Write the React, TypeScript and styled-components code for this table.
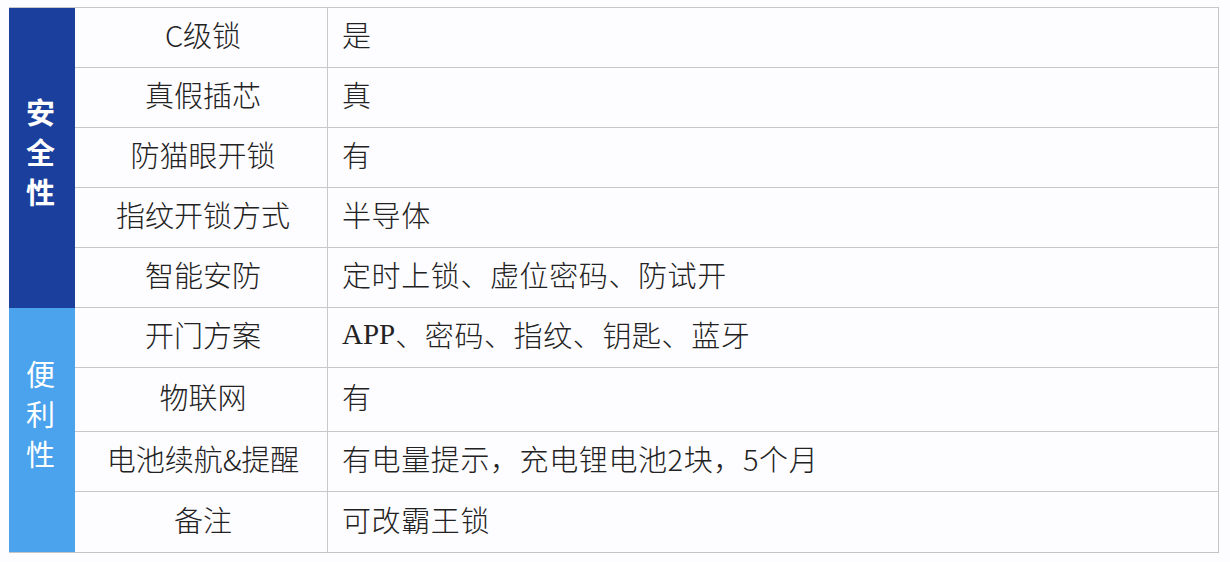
import React from 'react'
import styled, { createGlobalStyle } from 'styled-components'

const GlobalStyle = createGlobalStyle`
    html, body {
        margin: 0;
        padding: 0;
        background: #fdfcfe;
    }
    body {
        font-family: "Noto Sans CJK SC", "Noto Sans", sans-serif;
        color: #222;
    }
`

const Page = styled.div`
    width: 1230px;
    height: 562px;
    padding: 7px 0 0 9px;
    box-sizing: border-box;
`

const Table = styled.div`
    width: 1209px;
    border-right: 1px solid #c4c4c4;
    border-bottom: 1px solid #c4c4c4;
    border-top: 1px solid #c8c8c8;
    display: flex;
    flex-direction: column;
`

const Section = styled.div`
    display: flex;
`

const Side = styled.div<{ $bg: string; $bold?: boolean; $shift?: number }>`
    width: 66px;
    flex-shrink: 0;
    background: ${p => p.$bg};
    color: #fff;
    display: flex;
    flex-direction: column;
    align-items: center;
    justify-content: center;
    padding-bottom: ${p => p.$shift || 0}px;
    padding-right: 3px;
    box-sizing: border-box;
    font-size: 29px;
    font-weight: ${p => (p.$bold ? 700 : 400)};
    line-height: 40px;
`

const Rows = styled.div`
    flex: 1;
    display: flex;
    flex-direction: column;
`

const Row = styled.div<{ $h?: number; $last?: boolean }>`
    display: grid;
    grid-template-columns: 253px 1fr;
    height: ${p => p.$h || 60}px;
    border-bottom: ${p => (p.$last ? 'none' : '1px solid #c8c8c8')};
    box-sizing: border-box;
    font-size: 29px;
    font-weight: 300;
`

const Label = styled.div`
    display: flex;
    align-items: center;
    justify-content: center;
    border-right: 1px solid #c8c8c8;
    padding-bottom: 7px;
    padding-left: 4px;
`

const Value = styled.div`
    display: flex;
    align-items: center;
    padding-left: 14px;
    padding-bottom: 7px;
    white-space: nowrap;
    letter-spacing: 0.6px;
`

const Latin = styled.span`
    font-family: "Liberation Serif", serif;
    font-size: 29px;
    letter-spacing: 0;
`

type Item = { label: string; value: React.ReactNode; h?: number }

const safety: Item[] = [
    { label: 'C级锁', value: '是' },
    { label: '真假插芯', value: '真' },
    { label: '防猫眼开锁', value: '有' },
    { label: '指纹开锁方式', value: '半导体' },
    { label: '智能安防', value: '定时上锁、虚位密码、防试开' },
]

const convenience: Item[] = [
    { label: '开门方案', value: <><Latin>APP</Latin>、密码、指纹、钥匙、蓝牙</> },
    { label: '物联网', value: '有', h: 64 },
    { label: '电池续航&提醒', value: '有电量提示，充电锂电池2块，5个月' },
    { label: '备注', value: '可改霸王锁' },
]

const renderRows = (items: Item[], lastBorder: boolean) =>
    items.map((it, i) => (
        <Row key={it.label} $h={it.h} $last={!lastBorder && i === items.length - 1}>
            <Label>{it.label}</Label>
            <Value>{it.value}</Value>
        </Row>
    ))

const App = (): JSX.Element => {
    return (
        <Page>
            <GlobalStyle />
            <Table>
                <Section>
                    <Side $bg="#1b3f9c" $bold $shift={14}>
                        <span>安</span>
                        <span>全</span>
                        <span>性</span>
                    </Side>
                    <Rows>{renderRows(safety, true)}</Rows>
                </Section>
                <Section>
                    <Side $bg="#4aa3ec" $shift={34}>
                        <span>便</span>
                        <span>利</span>
                        <span>性</span>
                    </Side>
                    <Rows>{renderRows(convenience, false)}</Rows>
                </Section>
            </Table>
        </Page>
    )
}

export default App
